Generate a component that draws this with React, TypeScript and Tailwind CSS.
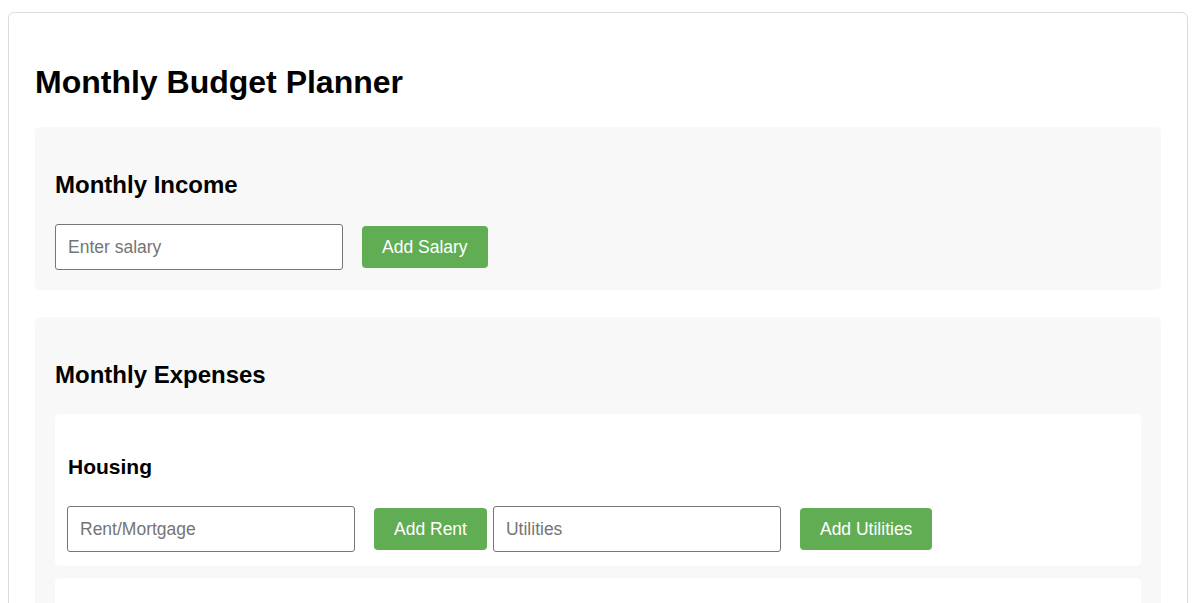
const inputCls =
  "w-[288px] h-[46px] px-3 border border-[#767676] rounded-[3px] bg-white text-[17.5px] text-black placeholder:text-[#757575] outline-none";
const buttonCls =
  "h-[42px] px-5 bg-[#61ad54] text-white text-[17.5px] rounded-[4px] cursor-pointer";

const Field = ({ placeholder, label }: { placeholder: string; label: string }) => (
  <div className="flex items-center">
    <input className={inputCls} type="number" placeholder={placeholder} />
    <button className={`${buttonCls} ml-[19px]`}>{label}</button>
  </div>
);

const Category = ({
  title,
  fields,
}: {
  title: string;
  fields: { placeholder: string; label: string }[];
}) => (
  <div className="bg-white rounded-[5px] pt-3 pb-[14px] px-3">
    <h3 className="mt-[29px] ml-[1px] text-[21px] leading-[24px] font-bold">{title}</h3>
    <div className="flex items-center gap-[6px] mt-[27px]">
      {fields.map((f) => (
        <Field key={f.label} placeholder={f.placeholder} label={f.label} />
      ))}
    </div>
  </div>
);

export default function App() {
  return (
    <div className="min-h-screen bg-white font-['Liberation_Sans',Arial,sans-serif] text-black pt-3 pl-2">
      <div className="w-[1180px] border border-[#dcdcdc] rounded-[6px] px-[26px] pt-[51px] pb-[26px]">
        <h1 className="text-[32px] leading-[36px] font-bold">Monthly Budget Planner</h1>

        <section className="mt-[27px] bg-[#f8f8f8] rounded-[5px] px-5 pt-5 pb-5">
          <h2 className="mt-6 text-[24px] leading-[27px] font-bold">Monthly Income</h2>
          <div className="mt-[26px]">
            <Field placeholder="Enter salary" label="Add Salary" />
          </div>
        </section>

        <section className="mt-[27px] bg-[#f8f8f8] rounded-[5px] px-5 pt-5 pb-5">
          <h2 className="mt-6 text-[24px] leading-[27px] font-bold">Monthly Expenses</h2>
          <div className="mt-[26px] flex flex-col gap-3">
            <Category
              title="Housing"
              fields={[
                { placeholder: "Rent/Mortgage", label: "Add Rent" },
                { placeholder: "Utilities", label: "Add Utilities" },
              ]}
            />
            <Category
              title="Transportation"
              fields={[
                { placeholder: "Car Payment", label: "Add Car Payment" },
                { placeholder: "Fuel", label: "Add Fuel" },
              ]}
            />
            <Category
              title="Food"
              fields={[
                { placeholder: "Groceries", label: "Add Groceries" },
                { placeholder: "Dining Out", label: "Add Dining Out" },
              ]}
            />
          </div>
        </section>
      </div>
    </div>
  );
}
